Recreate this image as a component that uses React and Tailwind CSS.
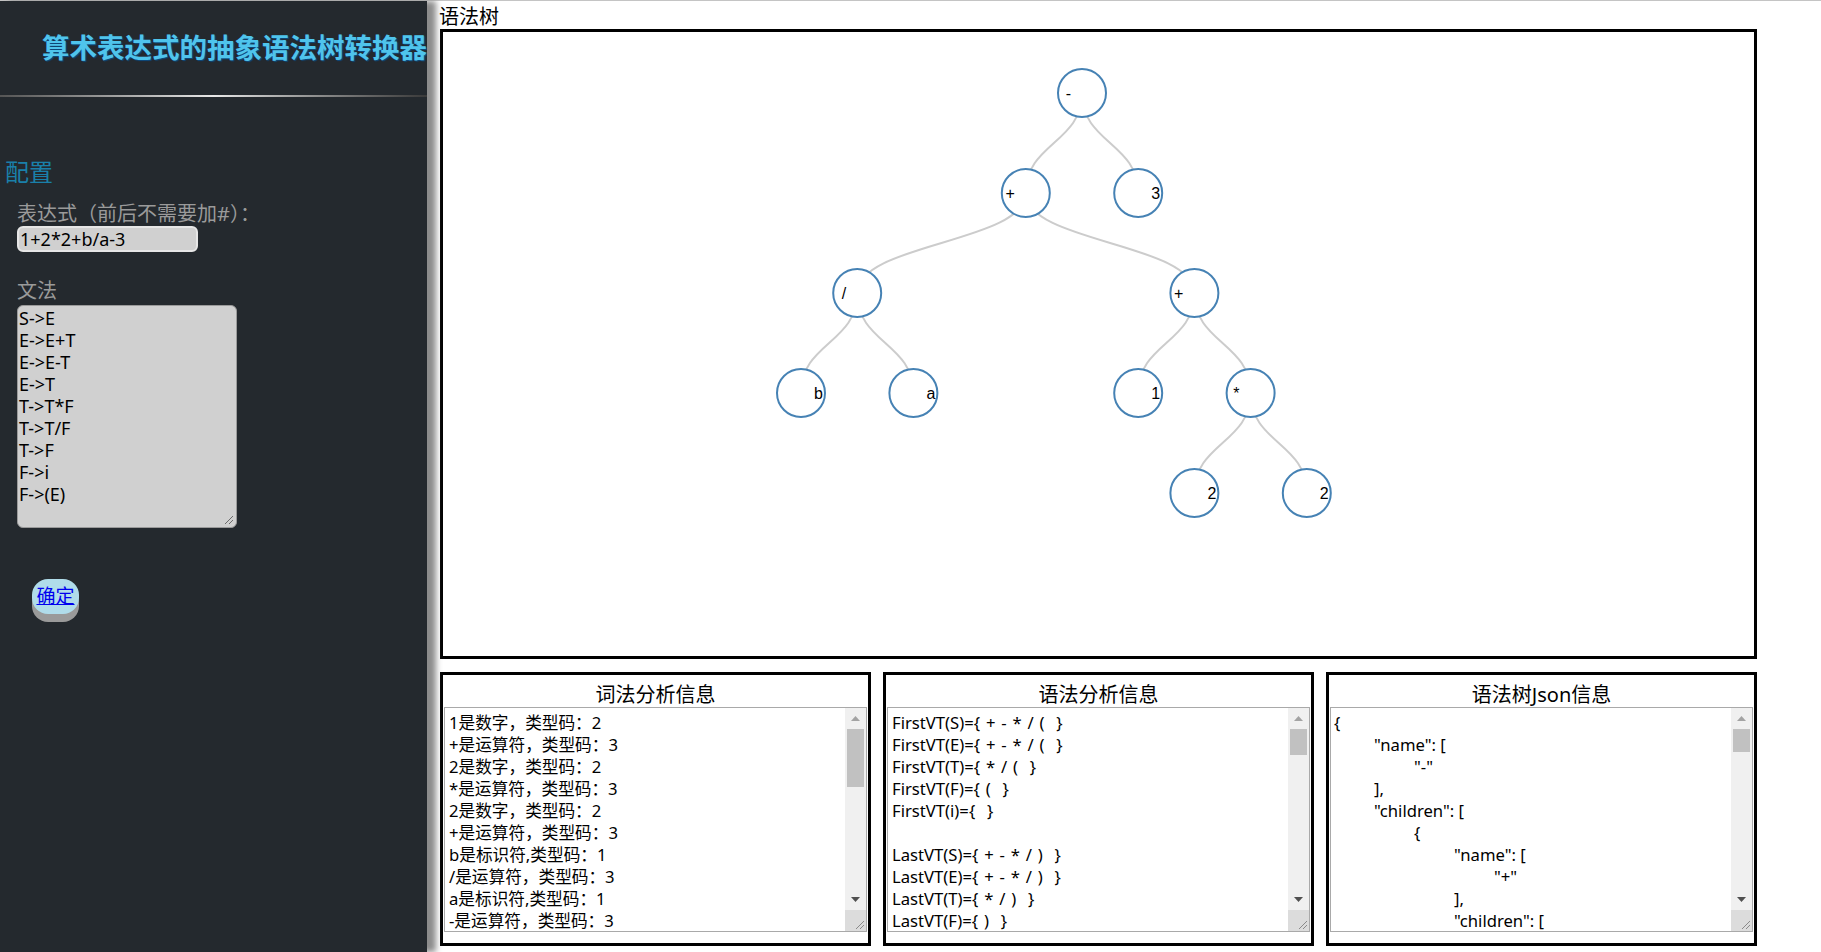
import React from 'react';

const lexLines = [
  '1是数字，类型码：2',
  '+是运算符，类型码：3',
  '2是数字，类型码：2',
  '*是运算符，类型码：3',
  '2是数字，类型码：2',
  '+是运算符，类型码：3',
  'b是标识符,类型码：1',
  '/是运算符，类型码：3',
  'a是标识符,类型码：1',
  '-是运算符，类型码：3',
];

const grammarInfo = [
  'FirstVT(S)={ + - * / (  }',
  'FirstVT(E)={ + - * / (  }',
  'FirstVT(T)={ * / (  }',
  'FirstVT(F)={ (  }',
  'FirstVT(i)={  }',
  '',
  'LastVT(S)={ + - * / )  }',
  'LastVT(E)={ + - * / )  }',
  'LastVT(T)={ * / )  }',
  'LastVT(F)={ )  }',
];

const jsonLines = [
  '{',
  '\t"name": [',
  '\t\t"-"',
  '\t],',
  '\t"children": [',
  '\t\t{',
  '\t\t\t"name": [',
  '\t\t\t\t"+"',
  '\t\t\t],',
  '\t\t\t"children": [',
];

const grammar = ['S->E', 'E->E+T', 'E->E-T', 'E->T', 'T->T*F', 'T->T/F', 'T->F', 'F->i', 'F->(E)'];

// d3 tree layout result: k = horizontal slot, d = depth
const nodes = [
  { id: 'root', name: '-', k: 5, d: 0 },
  { id: 'p1', name: '+', k: 4, d: 1, parent: 'root' },
  { id: 'n3', name: '3', k: 6, d: 1, parent: 'root' },
  { id: 'div', name: '/', k: 1, d: 2, parent: 'p1' },
  { id: 'p2', name: '+', k: 7, d: 2, parent: 'p1' },
  { id: 'b', name: 'b', k: 0, d: 3, parent: 'div' },
  { id: 'a', name: 'a', k: 2, d: 3, parent: 'div' },
  { id: 'n1', name: '1', k: 6, d: 3, parent: 'p2' },
  { id: 'mul', name: '*', k: 8, d: 3, parent: 'p2' },
  { id: 'n2a', name: '2', k: 7, d: 4, parent: 'mul' },
  { id: 'n2b', name: '2', k: 9, d: 4, parent: 'mul' },
];

const px = (n) => 358 + n.k * 56.2;
const py = (n) => 61 + n.d * 100;
const byId = Object.fromEntries(nodes.map((n) => [n.id, n]));
const hasKids = (n) => nodes.some((m) => m.parent === n.id);

const SyntaxTree = () => (
  <svg width="1311" height="624" className="block">
    <g fill="none" stroke="#cccccc" strokeWidth="2">
      {nodes.filter((n) => n.parent).map((n) => {
        const p = byId[n.parent];
        const sx = px(p), sy = py(p), tx = px(n), ty = py(n);
        const my = (sy + ty) / 2;
        return <path key={n.id} d={`M${sx},${sy}C${sx},${my} ${tx},${my} ${tx},${ty}`} />;
      })}
    </g>
    {nodes.map((n) => {
      const kids = hasKids(n);
      return (
        <g key={n.id} transform={`translate(${px(n)},${py(n)})`}>
          <circle r="24" fill="#ffffff" stroke="steelblue" strokeWidth="2" />
          <text
            x={kids ? -11 : 13}
            dy=".35em"
            textAnchor={kids ? 'end' : 'start'}
            fontSize="16"
            fontFamily="'Liberation Sans', Arial, sans-serif"
            fill="#000"
          >
            {n.name}
          </text>
        </g>
      );
    })}
  </svg>
);

const Grip = ({ color = '#8a8a8a' }) => (
  <svg width="11" height="11" viewBox="0 0 11 11">
    <path d="M2 10 L10 2 M6 10 L10 6" stroke={color} strokeWidth="1" />
  </svg>
);

const InfoBox = ({ lines, thumb, textClass }) => (
  <div className="mx-[1px] flex h-[225px] border border-[#a9a9a9] bg-white">
    <div className={textClass}>{lines.join('\n')}</div>
    <div className="flex w-[21px] flex-col bg-[#f0f0f0]">
      <div className="flex h-[21px] items-center justify-center">
        <svg width="9" height="5" viewBox="0 0 9 5"><polygon points="0,5 4.5,0 9,5" fill="#a3a3a3" /></svg>
      </div>
      <div className={`mx-[2px] bg-[#c1c1c1] ${thumb}`} />
      <div className="flex-1" />
      <div className="flex h-[21px] items-center justify-center">
        <svg width="9" height="5" viewBox="0 0 9 5"><polygon points="0,0 9,0 4.5,5" fill="#505050" /></svg>
      </div>
      <div className="flex h-[21px] items-end justify-end bg-[#dcdcdc] pr-[1px] pb-[1px]">
        <Grip />
      </div>
    </div>
  </div>
);

const Panel = ({ title, children }) => (
  <div className="h-[274px] w-[431px] border-[3px] border-black bg-white">
    <div className="pt-[8px] text-center text-[20px] leading-[24px] text-black">{title}</div>
    {children}
  </div>
);

export default function App() {
  return (
    <div className="min-h-screen bg-white font-['Noto_Sans','Noto_Sans_CJK_SC',sans-serif]">
      <div className="h-[1px] bg-[#c4c4c4]" />
      <div className="flex h-[951px]">
        <aside className="relative z-10 w-[427px] shrink-0 overflow-hidden bg-[#24292e] shadow-[9px_0_6px_#8c8c8c]">
          <h1 className="mt-[29px] whitespace-nowrap pl-[42px] text-[27.5px] font-bold leading-[36px] text-[#4fc4ec] [text-shadow:1px_1px_1px_#0c4a80]">
            算术表达式的抽象语法树转换器
          </h1>
          <div className="mt-[29px] h-[2px] bg-linear-to-r from-[#555555] via-[#e8e8e8] to-[#3a3a3a]" />

          <h3 className="mt-[59px] pl-[5px] text-[24px] leading-[32px] text-[#1a80aa]">配置</h3>

          <div className="pl-[17px]">
            <div className="mt-[14px] text-[20px] leading-[24px] text-[#9a9a9a]">表达式（前后不需要加#）：</div>
            <div className="flex h-[26px] w-[181px] items-center rounded-[6px] border-2 border-[#e6e6e6] bg-[#d0d0d0] pl-[1px] text-[18px] text-black">
              1+2*2+b/a-3
            </div>

            <div className="mt-[27px] text-[20px] leading-[24px] text-[#9a9a9a]">文法</div>
            <div className="relative mt-[2px] h-[223px] w-[220px] rounded-[6px] border border-[#9a9a9a] bg-[#d0d0d0] pt-[1px] pl-[1px]">
              <div className="whitespace-pre text-[18px] leading-[22px] text-black">{grammar.join('\n')}</div>
              <div className="absolute right-[2px] bottom-[2px] flex">
                <Grip color="#6b6b6b" />
              </div>
            </div>

            <div className="mt-[51px] pl-[15px]">
              <button className="flex h-[35px] w-[47px] items-center justify-center rounded-[16px] bg-[#b0dcea] text-[19px] leading-none text-[#0000ee] underline shadow-[0_8px_0_#9a9a9a]">
                确定
              </button>
            </div>
          </div>
        </aside>

        <main className="flex flex-col pl-[13px]">
          <div className="-ml-[1px] pt-[3px] text-[20px] leading-[25px] text-black">语法树</div>
          <div className="h-[630px] w-[1317px] border-[3px] border-black bg-white">
            <SyntaxTree />
          </div>

          <div className="mt-[13px] flex w-[1317px] justify-between">
            <Panel title="词法分析信息">
              <InfoBox
                lines={lexLines}
                thumb="h-[58px]"
                textClass="flex-1 overflow-hidden whitespace-pre pt-[4px] pl-[4px] text-[16.67px] leading-[22px] text-black"
              />
            </Panel>
            <Panel title="语法分析信息">
              <InfoBox
                lines={grammarInfo}
                thumb="h-[26px]"
                textClass="flex-1 overflow-hidden whitespace-pre pt-[4px] pl-[4px] text-[16.67px] leading-[22px] text-black [word-spacing:1.5px]"
              />
            </Panel>
            <Panel title="语法树Json信息">
              <InfoBox
                lines={jsonLines}
                thumb="h-[23px]"
                textClass="flex-1 overflow-hidden whitespace-pre pt-[4px] pl-[3px] text-[16.67px] leading-[22px] text-black [tab-size:40px]"
              />
            </Panel>
          </div>
        </main>
      </div>
    </div>
  );
}
